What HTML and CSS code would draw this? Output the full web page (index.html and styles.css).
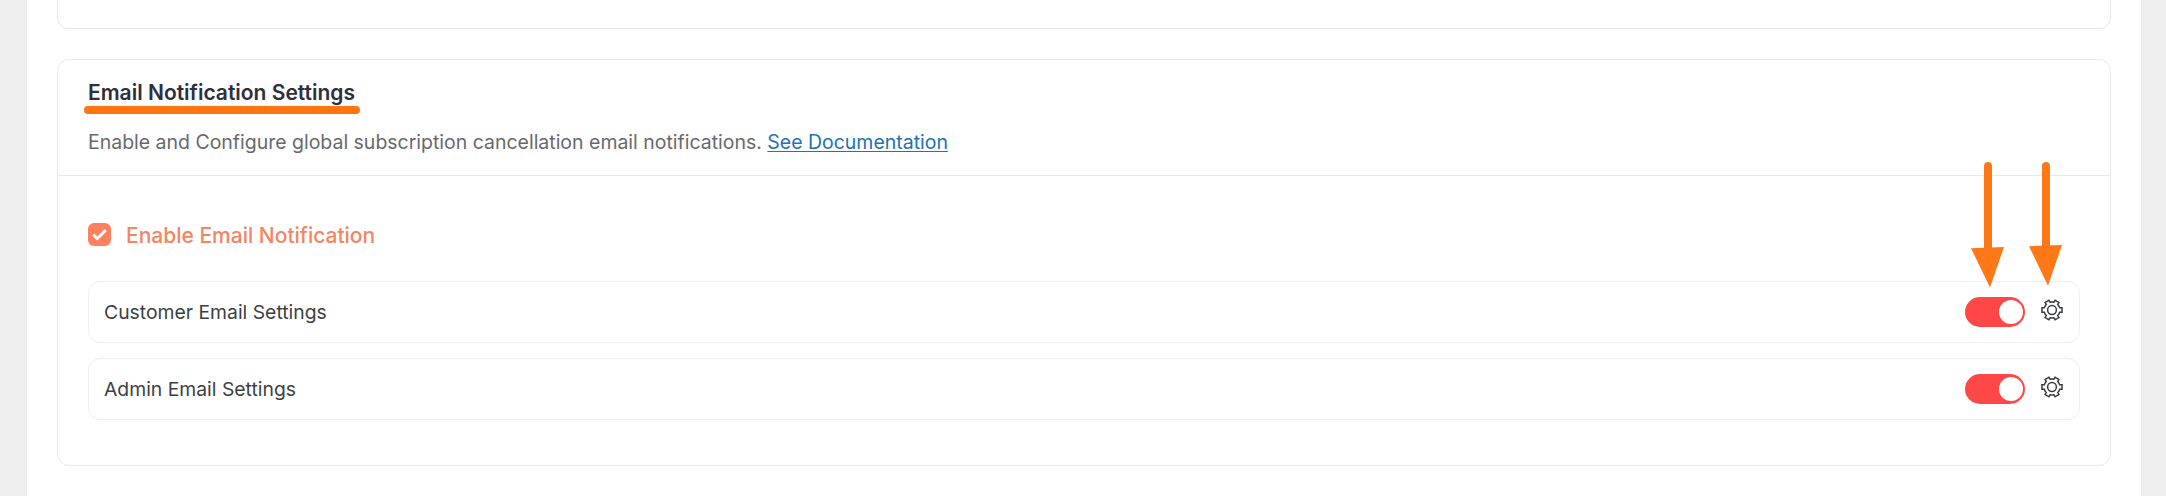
FILE: index.html
```html
<!DOCTYPE html>
<html lang="en">
<head>
<meta charset="utf-8">
<title>Email Notification Settings</title>
<link rel="stylesheet" href="styles.css">
</head>
<body>
<svg class="defs" aria-hidden="true">
  <symbol id="gear" viewBox="-12 -12 24 24">
    <path d="M7.7 -2.2L10 -2.2V2.2L7.7 2.2Q7.1 4.1 5.76 5.57L6.91 7.56L3.09 9.76L1.94 7.77Q0 8.2 -1.94 7.77L-3.09 9.76L-6.91 7.56L-5.76 5.57Q-7.1 4.1 -7.7 2.2L-10 2.2V-2.2L-7.7 -2.2Q-7.1 -4.1 -5.76 -5.57L-6.91 -7.56L-3.09 -9.76L-1.94 -7.77Q0 -8.2 1.94 -7.77L3.09 -9.76L6.91 -7.56L5.76 -5.57Q7.1 -4.1 7.7 -2.2Z"/>
    <circle r="4.4"/>
  </symbol>
</svg>
<main class="panel">
  <section class="card card-previous"></section>
  <section class="card">
    <header class="card-header">
      <h2 class="card-title">Email Notification Settings<span class="title-mark"></span></h2>
      <p class="card-text">Enable and Configure global subscription cancellation email notifications. <a class="link" href="#">See Documentation</a></p>
    </header>
    <div class="card-body">
      <label class="enable">
        <svg class="check" viewBox="0 0 23 23"><path d="M5.2 11.7L9.2 15.5L17.8 7.2"/></svg>
        <span class="enable-label">Enable Email Notification</span>
      </label>
      <div class="row">
        <span class="row-label">Customer Email Settings</span>
        <span class="toggle"><span class="knob"></span></span>
        <svg class="gear"><use href="#gear"/></svg>
      </div>
      <div class="row">
        <span class="row-label">Admin Email Settings</span>
        <span class="toggle"><span class="knob"></span></span>
        <svg class="gear"><use href="#gear"/></svg>
      </div>
    </div>
  </section>
</main>
<svg class="arrows" viewBox="0 0 92 126">
  <path class="shaft" d="M17 5V88M75 5V86"/>
  <path class="head" d="M0 87.2L33 86L19 126.5ZM58 85.2L91 84L77 124.8Z"/>
</svg>
</body>
</html>
```
FILE: styles.css
```css
* { box-sizing: border-box; }

body {
  margin: 0;
  height: 496px;
  padding: 0 25px 0 27px;
  background: #efefef;
  font-family: Inter, "Liberation Sans", sans-serif;
  overflow: hidden;
}

.defs { position: absolute; width: 0; height: 0; }

.panel {
  height: 496px;
  padding: 0 30px;
  background: #fff;
  box-shadow: 0 0 1px #ddd;
}

.card {
  height: 407px;
  border: 1px solid #e9e9eb;
  border-radius: 12px;
}

.card-previous {
  height: 29px;
  margin-bottom: 30px;
  border-top: 0;
  border-radius: 0 0 12px 12px;
}

.card-header {
  height: 116px;
  padding: 19px 30px 0;
  border-bottom: 1px solid #e9e9eb;
}

.card-title {
  position: relative;
  width: max-content;
  margin: 0 0 21px;
  color: #2d2e3e;
  font-size: 21px;
  font-weight: 600;
  line-height: 28px;
}

.title-mark {
  position: absolute;
  left: -4px;
  top: 27px;
  width: 276px;
  height: 8px;
  border-radius: 4px;
  background: #ff7512;
}

.card-text {
  margin: 0;
  color: #67686f;
  font-size: 19.48px;
  line-height: 28px;
}

.link {
  color: #2271b1;
  text-decoration: underline;
  text-decoration-thickness: 1px;
  text-underline-offset: 2px;
}

.card-body { padding: 44px 30px 0; }

.enable {
  display: flex;
  align-items: center;
  gap: 15px;
  height: 30px;
  margin-bottom: 31px;
}

.check {
  width: 23px;
  height: 23px;
  border-radius: 6px;
  margin-bottom: 1px;
  background: #ff805d;
  fill: none;
  stroke: #fff;
  stroke-width: 3;
}

.enable-label {
  color: #f7835f;
  font-size: 21px;
  font-weight: 500;
}

.row {
  display: flex;
  align-items: center;
  height: 62px;
  margin-bottom: 15px;
  padding: 0 15px;
  border: 1px solid #eeeeef;
  border-radius: 12px;
}

.row-label {
  flex: 1;
  color: #3d3f43;
  font-size: 19.35px;
}

.toggle {
  display: flex;
  justify-content: flex-end;
  width: 60px;
  height: 30px;
  margin-right: 15px;
  padding: 3px 2px;
  border-radius: 15px;
  background: #ff4747;
}

.knob {
  width: 24px;
  height: 24px;
  border-radius: 50%;
  background: #fff;
}

.gear {
  width: 24px;
  height: 24px;
  margin-bottom: 4px;
  fill: none;
  stroke: #3a3c40;
  stroke-width: 1.5;
}

.arrows {
  position: absolute;
  left: 1971px;
  top: 161px;
  width: 92px;
  height: 126px;
  overflow: visible;
}

.shaft {
  fill: none;
  stroke: #ff7818;
  stroke-width: 8;
  stroke-linecap: round;
}

.head { fill: #ff7818; }
```
